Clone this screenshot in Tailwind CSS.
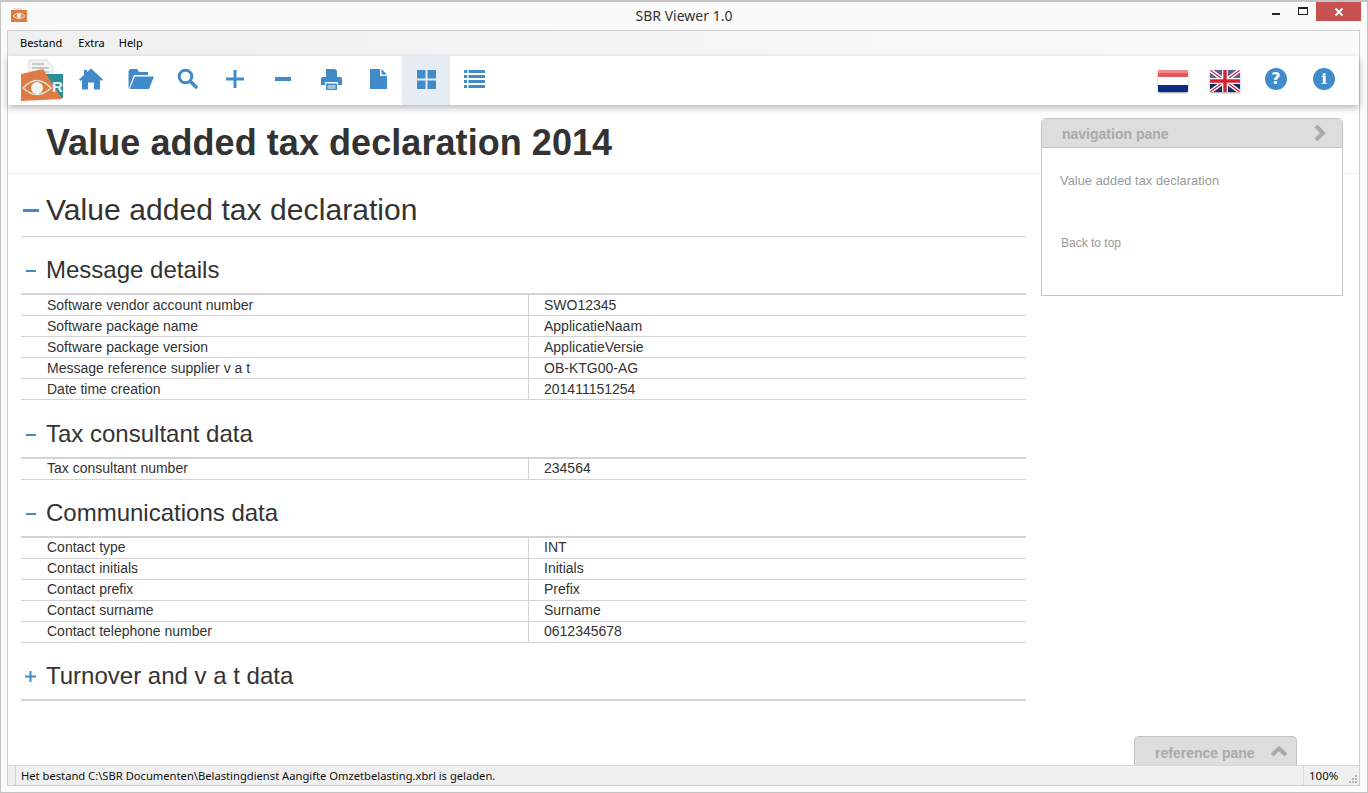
<!DOCTYPE html>
<html lang="nl">
<head>
    <meta charset="UTF-8">
    <title>SBR Viewer 1.0</title>
    <script src="https://cdn.jsdelivr.net/npm/@tailwindcss/browser@4"></script>
</head>
<body class="bg-white overflow-hidden">
<div class="w-[1368px] h-[793px] flex flex-col border-t-2 border-l border-r border-b border-[#c4c4c4] bg-[#fbfbfb] relative font-['Liberation_Sans',sans-serif]">
    <!-- title bar -->
    <div class="h-[28px] shrink-0 flex items-center relative">
        <svg class="absolute left-[10px] top-[5px]" width="16" height="16" viewBox="0 0 16 16">
            <path d="M3 1h8v2H3z" fill="#ddd"/>
            <rect x="0" y="3" width="16" height="12" fill="#e07b45"/>
            <path d="M2 9q6-6 12 0q-6 5-12 0z" fill="none" stroke="#e6e6d8" stroke-width="1"/>
            <circle cx="8" cy="8.8" r="2.2" fill="#f4f0e8"/>
        </svg>
        <div class="w-full text-center text-[14px] leading-[28px] text-[#333] font-['Noto_Sans',sans-serif]">SBR Viewer 1.0</div>
        <div class="absolute left-[1271px] top-[11px] w-[8px] h-[2px] bg-[#222]"></div>
        <div class="absolute left-[1297px] top-[5px] w-[10px] h-[8px] border border-t-2 border-[#222]"></div>
        <div class="absolute left-[1315px] top-0 w-[45px] h-[19px] bg-[#c75050] flex items-center justify-center">
            <svg width="10" height="10" viewBox="0 0 10 10"><path d="M1.500 1.500l7 7M8.500 1.500l-7 7" stroke="#fff" stroke-width="2"/></svg>
        </div>
    </div>

    <!-- client area -->
    <div class="mx-[6px] w-[1353px] h-[756px] flex flex-col border border-[#d0d0d0] bg-white relative">
        <!-- menu -->
        <div class="h-[25px] shrink-0 bg-gradient-to-r from-[#f0f0f0] to-[#fbfbfb] flex items-center pl-[12px] gap-[16px] text-[11px] text-black font-['Noto_Sans',sans-serif]">
            <span>Bestand</span><span>Extra</span><span class="-ml-[2px]">Help</span>
        </div>

        <!-- toolbar -->
        <div class="h-[49px] shrink-0 bg-white flex items-center shadow-[0_3px_7px_rgba(0,0,0,0.28)] relative z-10 text-[#428bca]">
            <svg class="ml-[12px] shrink-0" width="44" height="44" viewBox="0 0 44 44">
                <path d="M9 1h18l6 7v12H9z" fill="#f2f2f2" stroke="#ddd"/>
                <path d="M12 5h12M12 9h17M12 13h17" stroke="#c8c8c8" stroke-width="2"/>
                <rect x="25" y="15" width="18" height="24" fill="#2a8f99"/>
                <path d="M1 15l22-5 19 30-41 2z" fill="#e07b45"/>
                <text x="32" y="33" font-size="15" font-weight="700" fill="#e8f4f4" font-family="Liberation Sans Narrow, Liberation Sans">R</text>
                <path d="M3 29q14-15 28 0q-14 13-28 0z" fill="none" stroke="#d5e8dc" stroke-width="1.300"/>
                <circle cx="17" cy="29" r="6" fill="#f3f3ea"/>
            </svg>
            <div class="w-[48px] h-full flex items-center justify-center ml-[3px] pb-[3px]">
                <svg width="24" height="22" viewBox="0 0 24 22" fill="currentColor"><path d="M12 0.500 24 11.500l-1.500 1.500-1.500-1.300V21.500h-6v-7H9v7H3V11.700L1.500 13 0 11.500l5-4.600V2h3v2.100z"/></svg>
            </div>
            <div class="w-[48px] h-full flex items-center justify-center pb-[3px] pl-[4px]">
                <svg width="26" height="20" viewBox="0 0 26 20" fill="currentColor"><path d="M2 0h7l2 3h9v3H6L1 19h-.5V2zM7 7.500h19L21 20H1.500z"/></svg>
            </div>
            <div class="w-[48px] h-full flex items-center justify-center pb-[5px]">
                <svg width="21" height="21" viewBox="0 0 21 21" fill="none" stroke="currentColor"><circle cx="8.500" cy="8.500" r="6.300" stroke-width="3"/><path d="M13.500 13.500l5.500 5.500" stroke-width="3.600" stroke-linecap="round"/></svg>
            </div>
            <div class="w-[48px] h-full flex items-center justify-center pb-[3px]">
                <svg width="18" height="18" viewBox="0 0 18 18" fill="currentColor"><path d="M7.500 0h3v7.500H18v3h-7.500V18h-3v-7.500H0v-3h7.500z"/></svg>
            </div>
            <div class="w-[48px] h-full flex items-center justify-center pb-[3px]">
                <svg width="16" height="4" viewBox="0 0 16 4" fill="currentColor"><rect width="16" height="4"/></svg>
            </div>
            <div class="w-[48px] h-full flex items-center justify-center pb-[3px]">
                <svg width="21" height="21" viewBox="0 0 21 21" fill="currentColor"><path d="M5 0h9l2 2v6H5zM0 9.500q0-1.500 1.500-1.500h18q1.500 0 1.500 1.500V16h-4v-3H4v3H0zM5 14.500h11V21H5z"/><path d="M6.500 17h8M6.500 19h8" stroke="#fff"/></svg>
            </div>
            <div class="w-[47px] h-full flex items-center justify-center pb-[3px]">
                <svg width="17" height="20" viewBox="0 0 17 20" fill="currentColor"><path d="M0 0h10v7h7v13H0zM11.500 0 17 5.500h-5.500z"/></svg>
            </div>
            <div class="w-[48px] h-full flex items-center justify-center bg-[#e6edf4] pb-[3px]">
                <svg width="19" height="19" viewBox="0 0 19 19" fill="currentColor"><rect width="8.500" height="8.500"/><rect x="10.500" width="8.500" height="8.500"/><rect y="10.500" width="8.500" height="8.500"/><rect x="10.500" y="10.500" width="8.500" height="8.500"/></svg>
            </div>
            <div class="w-[48px] h-full flex items-center justify-center pb-[3px]">
                <svg width="21" height="18" viewBox="0 0 21 18" fill="currentColor"><rect width="3" height="3"/><rect x="4.500" width="16.500" height="3"/><rect y="5" width="3" height="3"/><rect x="4.500" y="5" width="16.500" height="3"/><rect y="10" width="3" height="3"/><rect x="4.500" y="10" width="16.500" height="3"/><rect y="15" width="3" height="3"/><rect x="4.500" y="15" width="16.500" height="3"/></svg>
            </div>

            <div class="ml-auto flex items-center mr-[24px]">
                <svg class="rounded-[1px] shadow-[0_1px_2px_rgba(0,0,0,0.4)]" width="30" height="22" viewBox="0 0 30 22">
                    <rect width="30" height="8" fill="#e8565e"/><rect y="0" width="30" height="3" fill="#f08a8c"/>
                    <rect y="7" width="30" height="8" fill="#fff"/><rect y="15" width="30" height="7" fill="#0d2d84"/>
                </svg>
                <svg class="ml-[22px] rounded-[1px] shadow-[0_1px_2px_rgba(0,0,0,0.4)]" width="30" height="22" viewBox="0 0 30 22">
                    <rect width="30" height="22" fill="#1b2a6b"/><rect width="30" height="8" fill="#5a5f96"/>
                    <path d="M0 0 30 22M30 0 0 22" stroke="#fff" stroke-width="4"/>
                    <path d="M0 0 30 22M30 0 0 22" stroke="#d8202f" stroke-width="1.200"/>
                    <path d="M15 0v22M0 11h30" stroke="#fff" stroke-width="6"/>
                    <path d="M15 0v22M0 11h30" stroke="#d8202f" stroke-width="3.500"/>
                </svg>
                <div class="w-[22px] h-[22px] ml-[25px] -mt-[4px] rounded-full bg-[#428bca] text-white text-[16px] leading-[22px] font-bold text-center font-['DejaVu_Sans',sans-serif]">?</div>
                <div class="w-[22px] h-[22px] ml-[26px] -mt-[4px] rounded-full bg-[#428bca] text-white text-[15px] leading-[22px] font-bold text-center font-['DejaVu_Serif',serif]">i</div>
            </div>
        </div>

        <!-- content -->
        <div class="flex-1 relative text-[#333] overflow-hidden">
            <div class="h-[69px] border-b border-[#eeeeee] pl-[38px] pt-[16px]">
                <h1 class="text-[36px] leading-[44px] font-bold text-[#333] tracking-[0.06px]">Value added tax declaration 2014</h1>
            </div>

            <div class="w-[1005px] ml-[13px]">
                <!-- section -->
                <div class="h-[63px] border-b border-[#d4d4d4] flex items-center pt-[9px]">
                    <span class="w-[16px] h-[3px] bg-[#428bca] ml-[2px] mr-[7px] mt-[1px]"></span>
                    <h2 class="text-[30px] leading-[36px] tracking-[0.07px]">Value added tax declaration</h2>
                </div>

                <div class="h-[58px] border-b-2 border-[#d4d4d4] flex items-end pb-[9px]">
                    <span class="w-[10px] h-[2px] bg-[#428bca] ml-[5px] mr-[10px] mb-[12px]"></span>
                    <h3 class="text-[24px] leading-[28px]">Message details</h3>
                </div>
                <div class="grid grid-cols-[508px_1fr] text-[14px] leading-[21px]">
                    <div class="h-[21px] border-b border-r border-[#d4d4d4] pl-[26px]">Software vendor account number</div><div class="h-[21px] border-b border-[#d4d4d4] pl-[15px]">SWO12345</div>
                    <div class="h-[21px] border-b border-r border-[#d4d4d4] pl-[26px]">Software package name</div><div class="h-[21px] border-b border-[#d4d4d4] pl-[15px]">ApplicatieNaam</div>
                    <div class="h-[21px] border-b border-r border-[#d4d4d4] pl-[26px]">Software package version</div><div class="h-[21px] border-b border-[#d4d4d4] pl-[15px]">ApplicatieVersie</div>
                    <div class="h-[21px] border-b border-r border-[#d4d4d4] pl-[26px]">Message reference supplier v a t</div><div class="h-[21px] border-b border-[#d4d4d4] pl-[15px]">OB-KTG00-AG</div>
                    <div class="h-[21px] border-b border-r border-[#d4d4d4] pl-[26px]">Date time creation</div><div class="h-[21px] border-b border-[#d4d4d4] pl-[15px]">201411151254</div>
                </div>

                <div class="h-[59px] border-b-2 border-[#d4d4d4] flex items-end pb-[9px]">
                    <span class="w-[10px] h-[2px] bg-[#428bca] ml-[5px] mr-[10px] mb-[12px]"></span>
                    <h3 class="text-[24px] leading-[28px]">Tax consultant data</h3>
                </div>
                <div class="grid grid-cols-[508px_1fr] text-[14px] leading-[19px]">
                    <div class="h-[21px] border-b border-r border-[#d4d4d4] pl-[26px]">Tax consultant number</div><div class="h-[21px] border-b border-[#d4d4d4] pl-[15px]">234564</div>
                </div>

                <div class="h-[58px] border-b-2 border-[#d4d4d4] flex items-end pb-[9px]">
                    <span class="w-[10px] h-[2px] bg-[#428bca] ml-[5px] mr-[10px] mb-[12px]"></span>
                    <h3 class="text-[24px] leading-[28px]">Communications data</h3>
                </div>
                <div class="grid grid-cols-[508px_1fr] text-[14px] leading-[19px]">
                    <div class="h-[21px] border-b border-r border-[#d4d4d4] pl-[26px]">Contact type</div><div class="h-[21px] border-b border-[#d4d4d4] pl-[15px]">INT</div>
                    <div class="h-[21px] border-b border-r border-[#d4d4d4] pl-[26px]">Contact initials</div><div class="h-[21px] border-b border-[#d4d4d4] pl-[15px]">Initials</div>
                    <div class="h-[21px] border-b border-r border-[#d4d4d4] pl-[26px]">Contact prefix</div><div class="h-[21px] border-b border-[#d4d4d4] pl-[15px]">Prefix</div>
                    <div class="h-[21px] border-b border-r border-[#d4d4d4] pl-[26px]">Contact surname</div><div class="h-[21px] border-b border-[#d4d4d4] pl-[15px]">Surname</div>
                    <div class="h-[21px] border-b border-r border-[#d4d4d4] pl-[26px]">Contact telephone number</div><div class="h-[21px] border-b border-[#d4d4d4] pl-[15px]">0612345678</div>
                </div>

                <div class="h-[58px] border-b-2 border-[#d4d4d4] flex items-end pb-[9px]">
                    <svg class="ml-[4px] mr-[10px] mb-[8px]" width="11" height="11" viewBox="0 0 11 11" fill="#428bca"><path d="M4.500 0h2v4.500H11v2H6.500V11h-2V6.500H0v-2h4.500z"/></svg>
                    <h3 class="text-[24px] leading-[28px]">Turnover and v a t data</h3>
                </div>
            </div>

            <!-- navigation pane -->
            <div class="absolute left-[1033px] top-[13px] w-[302px] h-[178px] border border-[#c4c4c4] rounded-t-[5px] bg-white">
                <div class="h-[29px] bg-[#dddddd] border-b border-[#c4c4c4] rounded-t-[4px] flex items-center pl-[20px] pr-[16px] justify-between">
                    <span class="text-[14px] font-bold text-[#aaaaaa] pt-[3px]">navigation pane</span>
                    <svg width="12" height="16" viewBox="0 0 12 16"><path d="M2 1l7 7-7 7" fill="none" stroke="#aaaaaa" stroke-width="4"/></svg>
                </div>
                <div class="pl-[18px] pt-[25px] text-[12.800px] leading-[16px] text-[#999999] tracking-[0.05px]">Value added tax declaration</div>
                <div class="pl-[19px] pt-[46px] text-[12px] leading-[16px] text-[#999999]">Back to top</div>
            </div>

            <!-- reference pane -->
            <div class="absolute left-[1126px] bottom-0 w-[163px] h-[29px] border border-b-0 border-[#c4c4c4] rounded-t-[5px] bg-[#dddddd] flex items-center pl-[20px] gap-[16px] pt-[4px]">
                <span class="text-[14px] font-bold text-[#aaaaaa]">reference pane</span>
                <svg class="-mt-[4px]" width="16" height="11" viewBox="0 0 16 11"><path d="M1 9l7-6.500L15 9" fill="none" stroke="#aaaaaa" stroke-width="4"/></svg>
            </div>
        </div>

        <!-- status bar -->
        <div class="h-[20px] shrink-0 bg-[#efefef] border-t border-[#d8d8d8] flex items-center text-[11.2px] text-[#111] font-['Noto_Sans',sans-serif]">
            <div class="h-full flex-1 border-l border-[#d0d0d0] ml-[7px] pl-[5px] leading-[19px]">Het bestand C:\SBR Documenten\Belastingdienst Aangifte Omzetbelasting.xbrl is geladen.</div>
            <div class="w-[56px] h-full border-l border-[#d8d8d8] pl-[5px] leading-[19px] text-[11.5px] relative">100%
                <svg class="absolute right-[1px] bottom-[1px]" width="9" height="9" viewBox="0 0 9 9" fill="#b4b4b4"><rect x="6" y="0" width="2" height="2"/><rect x="3" y="3" width="2" height="2"/><rect x="6" y="3" width="2" height="2"/><rect x="0" y="6" width="2" height="2"/><rect x="3" y="6" width="2" height="2"/><rect x="6" y="6" width="2" height="2"/></svg>
            </div>
        </div>
    </div>
</div>
</body>
</html>
